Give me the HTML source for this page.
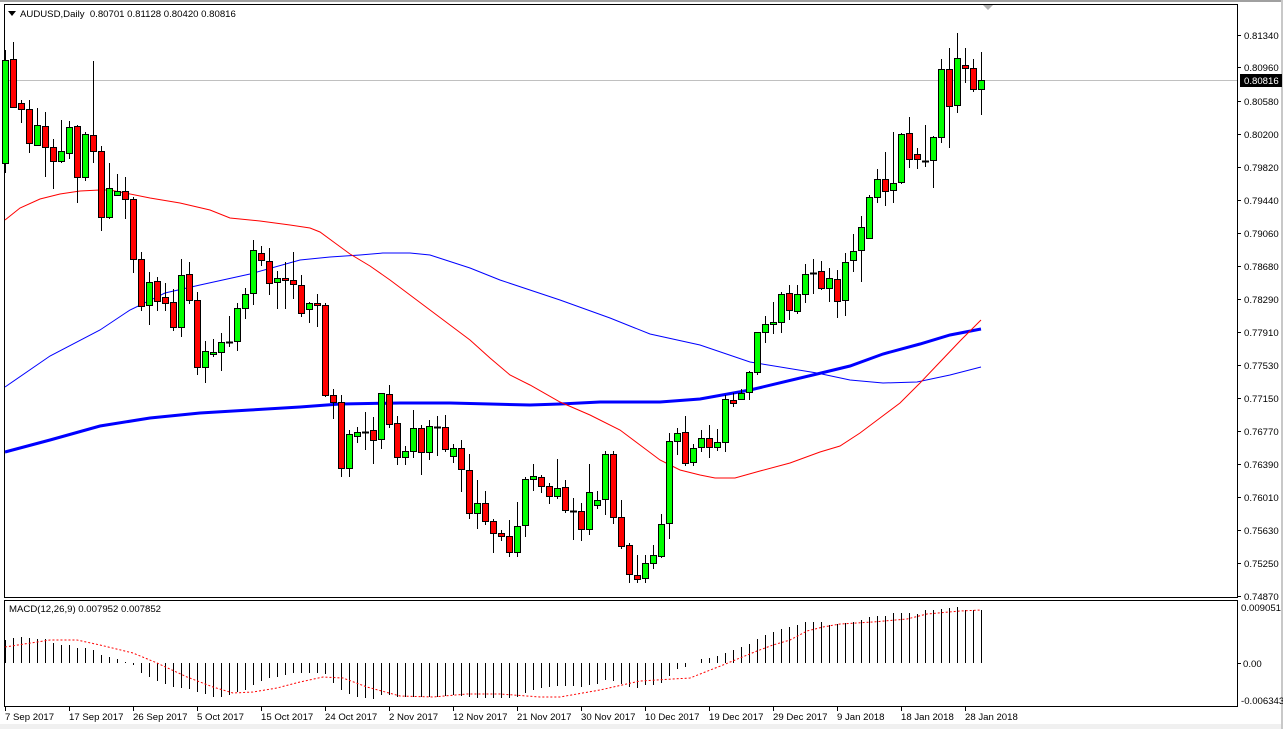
<!DOCTYPE html>
<html><head><meta charset="utf-8"><style>
html,body{margin:0;padding:0;background:#fff;width:1283px;height:729px;overflow:hidden}
svg{display:block}
text{font-family:"Liberation Sans",sans-serif;font-size:9.6px;fill:#000}
</style></head><body>
<svg id="s" width="1283" height="729" xmlns="http://www.w3.org/2000/svg">
<rect x="0" y="0" width="1283" height="729" fill="#fff"/>
<rect x="0" y="724" width="1283" height="5" fill="#f0f0f0"/>
<line x1="0" y1="1" x2="1283" y2="1" stroke="#a0a0a0" stroke-width="2"/>
<line x1="1282" y1="0" x2="1282" y2="729" stroke="#c8c8c8" stroke-width="2"/>
<rect x="4.5" y="4.5" width="1233" height="593" fill="none" stroke="#000"/>
<rect x="4.5" y="600.5" width="1233" height="106" fill="none" stroke="#000"/>
<line x1="5" y1="80.5" x2="1237" y2="80.5" stroke="#c0c0c0"/>
<polygon points="983,5 993,5 988,10" fill="#b0b0b0"/>
<polygon points="8,11 16,11 12,16" fill="#000"/>
<text x="20" y="17">AUDUSD,Daily&#160;&#160;0.80701 0.81128 0.80420 0.80816</text>
<text x="9" y="612">MACD(12,26,9) 0.007952 0.007852</text>
<g id="g"></g>
</svg>
<script>
var NS="http://www.w3.org/2000/svg",g=document.getElementById('g');
function el(t,a,txt){var e=document.createElementNS(NS,t);for(var k in a)e.setAttribute(k,a[k]);if(txt!==undefined)e.textContent=txt;g.appendChild(e);return e;}
function poly(p,c,w,d){var s="";for(var i=0;i<p.length;i+=2)s+=p[i]+","+p[i+1]+" ";var a={points:s,fill:"none",stroke:c,"stroke-width":w};if(d)a["stroke-dasharray"]=d;el("polyline",a);}
poly([5,387,50,356,100,330,130,310,165,293,200,285,250,274,300,260,330,257,360,255,383,253,410,253,430,255,470,268,500,280,560,300,610,318,650,334,700,345,750,362,817,373,850,380,883,383,917,382,950,375,981,367],"#0000ff",1);
poly([5,452,50,440,100,426,150,418,200,413,250,410,300,407,340,404,400,403,450,403,490,404,530,405,560,404,600,402,660,402,700,399,750,390,817,374,850,366,883,354,920,344,950,335,981,329],"#0000ff",3);
poly([5,220,20,208,40,199,60,194,80,191,100,190,110,190,125,193,150,198,180,203,210,210,230,218,260,221,290,225,310,228,320,232,335,243,350,254,370,266,390,280,410,295,430,310,450,325,470,340,490,358,510,375,530,385,560,402,590,415,620,430,640,445,660,460,680,470,700,475,715,478,735,478,760,471,790,463,820,452,840,446,860,433,880,418,900,403,920,383,940,362,960,341,975,326,981,320],"#ff0000",1);
var C=[[163,60,50,173],[59,107,42,107],[103,109,100,123],[109,143,100,153],[145,125,108,146],[126,147,112,177],[147,161,139,189],[161,151,120,163],[153,127,121,159],[126,177,125,203],[177,134,132,181],[135,151,61,163],[151,217,146,231],[217,188,163,219],[195,191,174,196],[191,199,177,219],[199,259,197,273],[259,306,252,311],[305,282,272,325],[281,301,277,311],[297,303,283,311],[302,327,289,331],[327,275,259,337],[274,300,262,304],[300,367,292,375],[367,351,341,383],[354,352,339,357],[352,342,333,371],[342,342,316,347],[341,308,303,351],[308,294,288,319],[293,250,240,305],[253,260,246,266],[261,283,248,295],[282,278,271,309],[278,280,262,309],[280,284,252,299],[285,313,275,317],[309,303,302,323],[303,305,294,327],[305,395,303,397],[395,402,389,419],[402,468,395,477],[468,434,430,477],[436,432,427,443],[432,432,412,450],[430,440,417,464],[439,393,393,449],[394,424,385,428],[423,457,416,465],[457,451,446,465],[451,428,410,458],[428,452,425,475],[452,426,420,460],[427,427,416,456],[427,449,415,452],[456,448,444,463],[448,469,440,492],[470,513,454,519],[513,503,480,529],[503,521,491,525],[521,533,519,553],[533,536,530,541],[536,552,520,557],[552,526,502,557],[525,479,477,537],[479,476,464,491],[477,486,475,493],[486,496,483,504],[496,488,459,499],[487,510,480,513],[511,511,498,540],[511,529,503,541],[529,492,464,535],[505,500,491,509],[499,454,451,515],[454,517,451,524],[517,546,500,549],[545,574,543,583],[575,579,555,583],[578,563,555,583],[563,555,545,569],[556,524,514,558],[523,441,433,539],[441,433,428,455],[432,463,416,466],[462,448,444,466],[447,438,430,452],[438,447,425,458],[447,442,429,451],[442,399,395,452],[400,403,393,407],[399,393,389,400],[392,372,371,400],[372,332,332,375],[332,324,316,343],[324,322,302,334],[322,294,292,333],[293,310,285,320],[311,294,285,314],[294,274,264,303],[273,273,259,294],[271,288,261,290],[288,278,268,302],[279,301,270,318],[300,262,253,316],[260,251,234,272],[250,227,216,282],[238,197,195,238],[197,179,169,203],[179,191,152,206],[190,183,132,203],[182,134,133,184],[133,159,117,168],[154,159,148,169],[161,161,125,167],[160,137,136,188],[137,69,59,143],[69,106,48,148],[105,58,33,113],[65,68,48,83],[68,89,59,92],[89,80,52,115]];
for(var i=0;i<C.length;i++){var x=5+8*i,c=C[i],o=c[0],cl=c[1];
el("line",{x1:x+.5,y1:c[2],x2:x+.5,y2:c[3],stroke:"#000"});
var t=Math.min(o,cl),b=Math.max(o,cl);
if(b-t<1.5){el("line",{x1:x-3,y1:t+.5,x2:x+4,y2:t+.5,stroke:"#000","stroke-width":2});}
else el("rect",{x:x-2.5,y:t+.5,width:6,height:b-t,fill:(cl<o?"#00ff00":"#ff0000"),stroke:"#000"});}
var H=[640,638,637,638,639,639,643,645,645,648,648,650,655,657,659,662,665,673,677,681,684,687,688,689,692,694,697,697,695,692,690,685,681,678,677,675,673,673,673,673,674,683,690,694,697,698,699,695,695,697,697,697,697,697,697,696,695,696,697,698,698,698,698,698,697,693,690,688,687,686,686,686,687,685,684,680,681,684,687,688,685,685,683,676,669,667,663,659,658,656,653,650,647,644,639,635,632,629,627,625,622,622,622,625,624,623,622,620,617,616,616,613,613,613,614,610,610,609,608,607,610,610,610];
for(var i=0;i<H.length;i++){var x=5+8*i+.5;if(Math.abs(H[i]-663)>0.5)el("line",{x1:x,y1:663,x2:x,y2:H[i],stroke:"#000"});}
poly([5,647,50,640,77,640,100,645,133,653,157,663,187,677,213,687,233,693,253,692,277,688,300,682,323,677,343,678,367,687,400,696,433,697,467,694,500,694,540,697,560,697,600,690,640,681,690,678,723,665,757,651,773,645,790,640,807,631,823,627,840,624,873,622,907,619,927,614,960,611,981,610],"#ff0000",1,"2,2");
var P=[["0.81340",35],["0.80960",67],["0.80580",101],["0.80200",134],["0.79820",167],["0.79440",200],["0.79060",233],["0.78680",266],["0.78290",299],["0.77910",332],["0.77530",365],["0.77150",398],["0.76770",431],["0.76390",464],["0.76010",497],["0.75630",530],["0.75250",563],["0.74870",596]];
P.forEach(function(p){el("line",{x1:1238,y1:p[1]+.5,x2:1241,y2:p[1]+.5,stroke:"#000"});el("text",{x:1244,y:p[1]+4},p[0]);});
el("rect",{x:1240,y:74,width:42,height:13,fill:"#000"});
el("text",{x:1244,y:84,style:"fill:#fff"},"0.80816");
el("text",{x:1241,y:611},"0.009051");
el("line",{x1:1238,y1:663.5,x2:1241,y2:663.5,stroke:"#000"});
el("text",{x:1243,y:667},"0.00");
el("text",{x:1241,y:704},"-0.006343");
var D=["7 Sep 2017","17 Sep 2017","26 Sep 2017","5 Oct 2017","15 Oct 2017","24 Oct 2017","2 Nov 2017","12 Nov 2017","21 Nov 2017","30 Nov 2017","10 Dec 2017","19 Dec 2017","29 Dec 2017","9 Jan 2018","18 Jan 2018","28 Jan 2018"];
D.forEach(function(d,i){var x=5+64*i;el("line",{x1:x+.5,y1:707,x2:x+.5,y2:711,stroke:"#000"});el("text",{x:x,y:720},d);});
</script>
</body></html>
